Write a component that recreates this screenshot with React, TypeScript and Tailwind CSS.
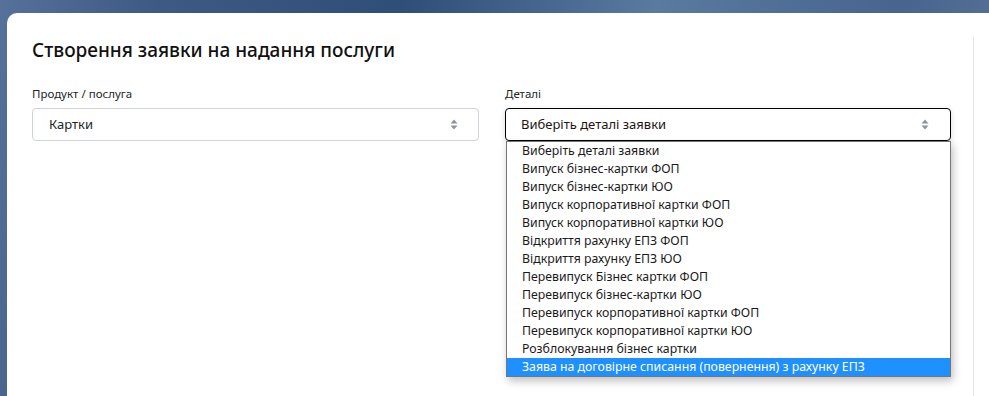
import React from "react";

const options = [
  "Виберіть деталі заявки",
  "Випуск бізнес-картки ФОП",
  "Випуск бізнес-картки ЮО",
  "Випуск корпоративної картки ФОП",
  "Випуск корпоративної картки ЮО",
  "Відкриття рахунку ЕПЗ ФОП",
  "Відкриття рахунку ЕПЗ ЮО",
  "Перевипуск Бізнес картки ФОП",
  "Перевипуск бізнес-картки ЮО",
  "Перевипуск корпоративної картки ФОП",
  "Перевипуск корпоративної картки ЮО",
  "Розблокування бізнес картки",
  "Заява на договірне списання (повернення) з рахунку ЕПЗ",
];

function Arrows() {
  return (
    <svg width="8" height="11" viewBox="0 0 8 11" className="shrink-0">
      <path d="M4 0.5 L7.5 4.5 H0.5 Z" fill="#8d949c" />
      <path d="M4 10.5 L7.5 6.5 H0.5 Z" fill="#8d949c" />
    </svg>
  );
}

export default function App() {
  return (
    <div
      className="w-[989px] h-[396px] overflow-hidden pt-[13px] pl-[7px] bg-[linear-gradient(100deg,#56719a_0%,#3d5a82_15%,#2f4e78_38%,#5b7aa0_62%,#47658d_85%,#5a7499_100%)]"
      style={{ fontFamily: '"Noto Sans", "Open Sans", sans-serif' }}
    >
      <div className="h-full bg-white rounded-tl-[10px] flex">
        <div className="w-[966px] shrink-0 pl-[25px] pr-[22px] pt-[23px]">
          <h1 className="text-[19px] leading-[28px] font-medium text-[#111]">
            Створення заявки на надання послуги
          </h1>
          <div className="mt-[22px] flex gap-[26px]">
            <div className="w-[447px]">
              <div className="text-[11.5px] leading-[16px] text-[#212529] mb-[6px]">
                Продукт / послуга
              </div>
              <div className="h-[33px] border border-[#cfd4d9] rounded-[4px] flex items-center justify-between pl-[16px] pr-[20px]">
                <span className="text-[13px] text-[#212529]">Картки</span>
                <Arrows />
              </div>
            </div>
            <div className="w-[446px] relative">
              <div className="text-[11.5px] leading-[16px] text-[#212529] mb-[6px]">
                Деталі
              </div>
              <div className="h-[33px] border border-black rounded-[4px] flex items-center justify-between pl-[15px] pr-[21px] shadow-[0_2px_6px_rgba(0,0,0,0.15)]">
                <span className="text-[13px] text-[#1f1414]">
                  Виберіть деталі заявки
                </span>
                <Arrows />
              </div>
              <div className="absolute top-[55px] left-[1px] right-0 bg-white border border-[#767676] shadow-[2px_4px_8px_rgba(0,0,0,0.25)] z-10">
                {options.map((o, i) => (
                  <div
                    key={o}
                    className={
                      "h-[18px] leading-[18px] pl-[15px] text-[12.3px] whitespace-nowrap " +
                      (i === options.length - 1
                        ? "bg-[#1e90ff] text-white"
                        : "text-[#1a1a1a]")
                    }
                  >
                    {o}
                  </div>
                ))}
              </div>
            </div>
          </div>
        </div>
        <div className="mt-[24px] w-px bg-[#e4e4e4]" />
      </div>
    </div>
  );
}
